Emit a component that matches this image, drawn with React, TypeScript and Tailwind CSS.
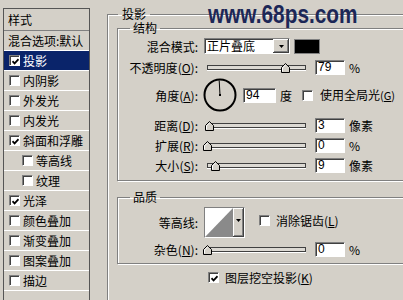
import clsx from "clsx";

const sunken =
  "border border-t-[#808080] border-l-[#808080] border-b-white border-r-white shadow-[inset_1px_1px_0_#404040]";
const raised =
  "bg-[#d4d0c8] shadow-[inset_-1px_-1px_0_#404040,inset_1px_1px_0_#fff,inset_-2px_-2px_0_#808080]";
const etched = "border border-[#808080] shadow-[inset_1px_1px_0_#fff,1px_1px_0_#fff]";

type StyleItem = { label: string; checked?: boolean; active?: boolean; sub?: boolean };

const styleItems: StyleItem[] = [
  { label: "投影", checked: true, active: true },
  { label: "内阴影" },
  { label: "外发光" },
  { label: "内发光" },
  { label: "斜面和浮雕", checked: true },
  { label: "等高线", sub: true },
  { label: "纹理", sub: true },
  { label: "光泽", checked: true },
  { label: "颜色叠加" },
  { label: "渐变叠加" },
  { label: "图案叠加" },
  { label: "描边" },
];

function CheckBox({ checked, className }: { checked?: boolean; className?: string }) {
  return (
    <span className={clsx("w-[11px] h-[11px] shrink-0 bg-white grid place-items-center", sunken, className)}>
      {checked && (
        <svg viewBox="0 0 7 7" className="w-[7px] h-[7px] ml-px mt-px">
          <path d="M0.5 3.2 L2.6 5.4 L6.5 1.2" fill="none" stroke="#000" strokeWidth="1.7" />
        </svg>
      )}
    </span>
  );
}

function DownArrow() {
  return (
    <svg viewBox="0 0 5 3" className="w-[5px] h-[3px]">
      <path d="M0 0 H5 L2.5 3 Z" fill="#000" />
    </svg>
  );
}

// pos = thumb centre measured from the track's left edge
function Slider({ pos }: { pos: number }) {
  return (
    <div className="relative ml-[9px] w-[99px] h-[5px] shrink-0 border border-[#404040] bg-[#dcd9d3] shadow-[0_1px_0_#fff]">
      <svg
        viewBox="0 0 9 10"
        className="absolute top-[-3px] w-[9px] h-[10px]"
        style={{ left: pos - 5.5 }}
      >
        <path d="M4.5 0.5 L8.5 4.5 L8.5 9.5 L0.5 9.5 L0.5 4.5 Z" fill="#d4d0c8" stroke="#000" strokeWidth="1" />
        <path d="M1.5 8.5 L1.5 4.9 L4.5 1.9" fill="none" stroke="#fff" strokeWidth="1" />
      </svg>
    </div>
  );
}

function NumBox({ value, className }: { value: string; className?: string }) {
  return (
    <span
      className={clsx(
        "h-[15px] shrink-0 bg-white pl-[2px] font-['Liberation_Sans',sans-serif] text-[12px] leading-[12px]",
        sunken,
        className,
      )}
    >
      {value}
    </span>
  );
}

function Label({ children }: { children: React.ReactNode }) {
  return <span className="w-[80px] shrink-0 text-right whitespace-nowrap">{children}</span>;
}

function Key({ k }: { k: string }) {
  return (
    <>
      (<span className="underline">{k}</span>)
    </>
  );
}

function SliderRow({ label, k, pos, value, unit, className }: { label: string; k: string; pos: number; value: string; unit: string; className?: string }) {
  return (
    <div className={clsx("flex items-center h-[15px]", className)}>
      <Label>
        {label}
        <Key k={k} />:
      </Label>
      <Slider pos={pos} />
      <NumBox value={value} className="ml-[9px] w-[30px]" />
      <span className="ml-[4px] whitespace-nowrap">{unit}</span>
    </div>
  );
}

export default function App() {
  return (
    <div className="relative w-[403px] h-[300px] overflow-hidden flex bg-[#d4d0c8] text-black text-[12px] leading-[15px] font-['Noto_Sans_CJK_SC',sans-serif]">
      {/* style list */}
      <div className="mt-[8px] ml-[3px] w-[87px] h-[300px] shrink-0 border-t border-l border-r border-[#555]">
        <div className="h-[22px] flex items-center pl-[4px] border-b border-[#808080]">样式</div>
        <div className="h-[20px] flex items-center pl-[4px] border-b border-white whitespace-nowrap overflow-hidden">
          混合选项:默认
        </div>
        {styleItems.map((s) => (
          <div
            key={s.label}
            className={clsx(
              "h-[20px] flex items-center gap-[3px] border-b border-white whitespace-nowrap",
              s.sub ? "pl-[18px]" : "pl-[5px]",
              s.active && "bg-[#0a246a] text-white",
            )}
          >
            <CheckBox checked={s.checked} />
            <span>{s.label}</span>
          </div>
        ))}
      </div>

      {/* drop shadow settings */}
      <fieldset className="ml-[17px] mt-[8px] w-[330px] h-[300px] shrink-0 border-t border-l border-[#808080] shadow-[inset_1px_1px_0_#fff] pl-[9px] pr-[8px]">
        <legend className="ml-[1px] px-[4px] leading-[12px]">投影</legend>

        <fieldset className={clsx("mt-[2px] pb-[7px]", etched)}>
          <legend className="ml-[12px] px-[3px] leading-[12px]">结构</legend>

          <div className="mt-[4px] flex items-center h-[16px]">
            <Label>混合模式:</Label>
            <div className={clsx("ml-[6px] w-[86px] h-[16px] shrink-0 flex bg-white", sunken)}>
              <span className="flex-1 pl-[2px] leading-[14px] whitespace-nowrap">正片叠底</span>
              <span className={clsx("w-[16px] grid place-items-center", raised)}>
                <DownArrow />
              </span>
            </div>
            <span className="ml-[4px] w-[26px] h-[15px] shrink-0 bg-black border border-[#808080]" />
          </div>

          <SliderRow className="mt-[6px]" label="不透明度" k="O" pos={78.5} value="79" unit="%" />

          <div className="mt-[3px] flex items-center h-[34px]">
            <Label>
              角度
              <Key k="A" />:
            </Label>
            <svg viewBox="0 0 34 34" className="ml-[5px] w-[34px] h-[34px] shrink-0">
              <circle cx="17" cy="17" r="15.5" fill="none" stroke="#000" strokeWidth="2" />
              <line x1="17" y1="17" x2="16.2" y2="2.5" stroke="#000" strokeWidth="1" />
              <rect x="16" y="16" width="2" height="2" fill="#000" />
            </svg>
            <NumBox value="94" className="ml-[6px] w-[33px]" />
            <span className="ml-[4px]">度</span>
            <CheckBox className="ml-[10px]" />
            <span className="ml-[7px] whitespace-nowrap">
              使用全局光
              <span className="text-[11px]">
                <Key k="G" />
              </span>
            </span>
          </div>

          <SliderRow className="mt-[6px]" label="距离" k="D" pos={2.5} value="3" unit="像素" />
          <SliderRow className="mt-[5px]" label="扩展" k="R" pos={0} value="0" unit="%" />
          <SliderRow className="mt-[5px]" label="大小" k="S" pos={8.5} value="9" unit="像素" />
        </fieldset>

        <fieldset className={clsx("mt-[10px] pb-[6px]", etched)}>
          <legend className="ml-[12px] px-[3px] leading-[12px]">品质</legend>

          <div className="mt-[4px] flex items-center h-[31px]">
            <Label>等高线:</Label>
            <div className={clsx("ml-[6px] w-[41px] h-[31px] shrink-0 flex", sunken)}>
              <svg viewBox="0 0 28 28" preserveAspectRatio="none" className="flex-1 h-full bg-white">
                <path d="M0 28 L28 0 L28 28 Z" fill="#8a8a8a" />
              </svg>
              <span className={clsx("w-[11px] flex justify-center pt-[11px]", raised)}>
                <DownArrow />
              </span>
            </div>
            <CheckBox className="ml-[14px] self-start mt-[8px]" />
            <span className="ml-[6px] whitespace-nowrap self-start mt-[6px]">
              消除锯齿
              <Key k="L" />
            </span>
          </div>

          <SliderRow className="mt-[4px]" label="杂色" k="N" pos={0} value="0" unit="%" />
        </fieldset>

        <div className="mt-[6px] flex items-center h-[15px]">
          <CheckBox checked className="ml-[91px]" />
          <span className="ml-[6px] whitespace-nowrap">
            图层挖空投影
            <Key k="K" />
          </span>
        </div>
      </fieldset>

      {/* watermark */}
      <span className="absolute left-[208px] top-[1px] origin-left scale-x-80 font-['Liberation_Sans',sans-serif] font-bold text-[26px] leading-[26px] text-[#1c2757] whitespace-nowrap">
        www.68ps.com
      </span>
    </div>
  );
}
